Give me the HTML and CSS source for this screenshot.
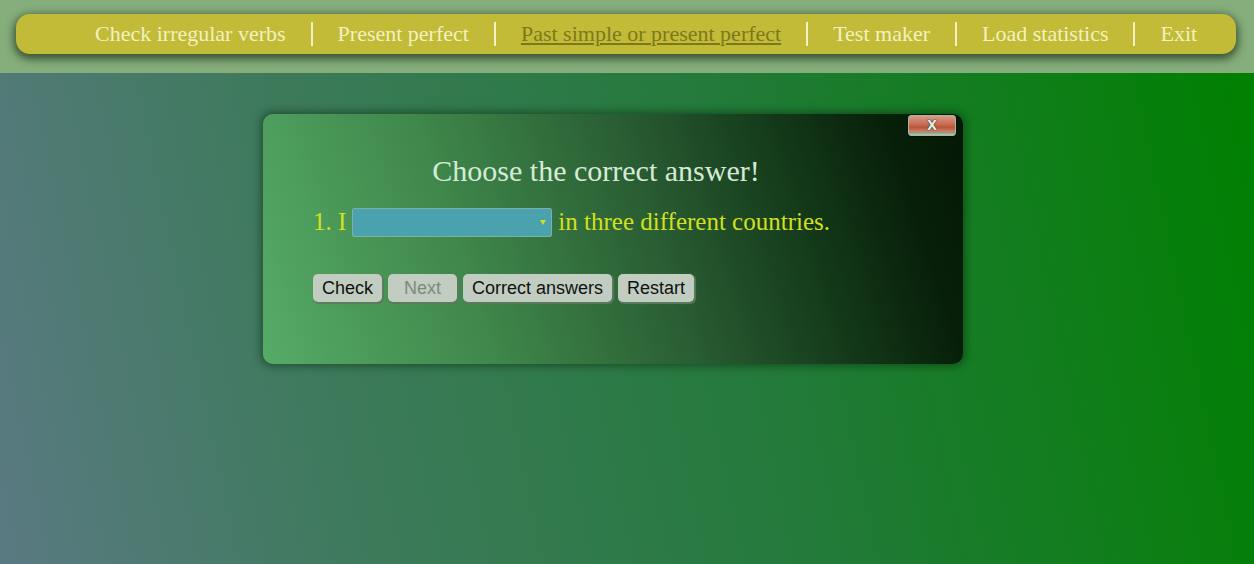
FILE: index.html
```html
<!DOCTYPE html>
<html>
<head>
<meta charset="utf-8">
<link rel="stylesheet" href="styles.css">
</head>
<body>
<header class="top">
  <nav class="menu">
    <a class="item">Check irregular verbs</a>
    <a class="item">Present perfect</a>
    <a class="item active">Past simple or present perfect</a>
    <a class="item">Test maker</a>
    <a class="item">Load statistics</a>
    <a class="item">Exit</a>
  </nav>
</header>
<main class="stage">
  <section class="panel">
    <button class="close"><span>x</span></button>
    <h1 class="title">Choose the correct answer!</h1>
    <div class="question">
      <span>1. I</span>
      <div class="select"><span class="arrow"></span></div>
      <span>in three different countries.</span>
    </div>
    <div class="buttons">
      <button class="btn">Check</button>
      <button class="btn disabled">Next</button>
      <button class="btn">Correct answers</button>
      <button class="btn">Restart</button>
    </div>
  </section>
</main>
</body>
</html>
```

FILE: styles.css
```css
html, body {
  margin: 0;
  padding: 0;
  height: 100%;
}
body {
  font-family: "Liberation Serif", "Times New Roman", serif;
  display: flex;
  flex-direction: column;
  overflow: hidden;
}
.top {
  height: 73px;
  box-sizing: border-box;
  background: #86ae7c;
  padding: 14px 18px 0 16px;
  position: relative;
  z-index: 2;
}
.menu {
  height: 40px;
  background: #c2bb38;
  border-radius: 14px;
  box-shadow: 0 3px 8px 2px rgba(30, 50, 25, 0.75);
  display: flex;
  align-items: center;
  padding-left: 54px;
}
.item {
  color: #f4f0c0;
  font-size: 22px;
  padding: 0 25px 0 25px;
  line-height: 24px;
  border-left: 2px solid #f4f0c0;
  white-space: nowrap;
}
.item:first-child {
  border-left: none;
}
.item.active {
  color: #7d781c;
  text-decoration: underline;
}
.stage {
  flex: 1;
  background: linear-gradient(78deg, #5a7a82 0%, #3f7a5e 25%, #237a3a 60%, #008000 100%);
  padding-top: 41px;
}
.panel {
  position: relative;
  margin-left: 263px;
  width: 700px;
  height: 250px;
  box-sizing: border-box;
  border-radius: 10px;
  background: linear-gradient(72deg, #56ab67 0%, #3f874b 30%, #2a5e33 55%, #143a1a 75%, #071f09 90%, #041805 100%);
  box-shadow: 0 0 8px 2px rgba(10, 40, 15, 0.55);
  padding: 40px 84px 0 50px;
}
.close {
  position: absolute;
  top: 1px;
  right: 7px;
  width: 48px;
  height: 21px;
  padding: 0;
  border: 1px solid #a8b8a0;
  border-radius: 3px;
  background: linear-gradient(to bottom, #d89a88 0%, #c76a50 45%, #b9553a 60%, #cf8a70 85%, #8a9a80 86%, #b8c4b0 100%);
  box-shadow: 0 1px 1px rgba(0,0,0,0.4);
  display: flex;
  align-items: center;
  justify-content: center;
}
.close span {
  font-family: "Liberation Sans", Arial, sans-serif;
  font-weight: bold;
  font-size: 18px;
  line-height: 16px;
  color: #e6ece0;
  text-shadow: 0 0 1px #2a3a2a, 0 0 1px #2a3a2a, 0 0 1px #2a3a2a;
  margin-top: -4px;
}
.title {
  margin: 0;
  text-align: center;
  font-weight: normal;
  font-size: 30px;
  line-height: 34px;
  color: #d6ead6;
}
.question {
  margin-top: 19px;
  display: flex;
  align-items: center;
  gap: 6px;
  font-size: 25px;
  color: #d2e01e;
  height: 30px;
}
.select {
  width: 200px;
  height: 29px;
  box-sizing: border-box;
  background: #4aa2ae;
  border: 1px solid #7fb0a8;
  border-radius: 2px;
  position: relative;
  margin-top: 1px;
}
.arrow {
  position: absolute;
  right: 5px;
  top: 11px;
  border-left: 3px solid transparent;
  border-right: 3px solid transparent;
  border-top: 5px solid #d2e01e;
}
.buttons {
  margin-top: 37px;
  display: flex;
  gap: 6px;
}
.btn {
  font-family: "Liberation Sans", Arial, sans-serif;
  font-size: 18px;
  height: 28px;
  padding: 0 9px;
  background: #c0cdc0;
  color: #111;
  border: none;
  border-radius: 5px;
  box-shadow: 1px 1px 1px 1px #5b7a5e;
}
.btn.disabled {
  color: #7c8a7c;
  padding: 0 16px;
}
```
